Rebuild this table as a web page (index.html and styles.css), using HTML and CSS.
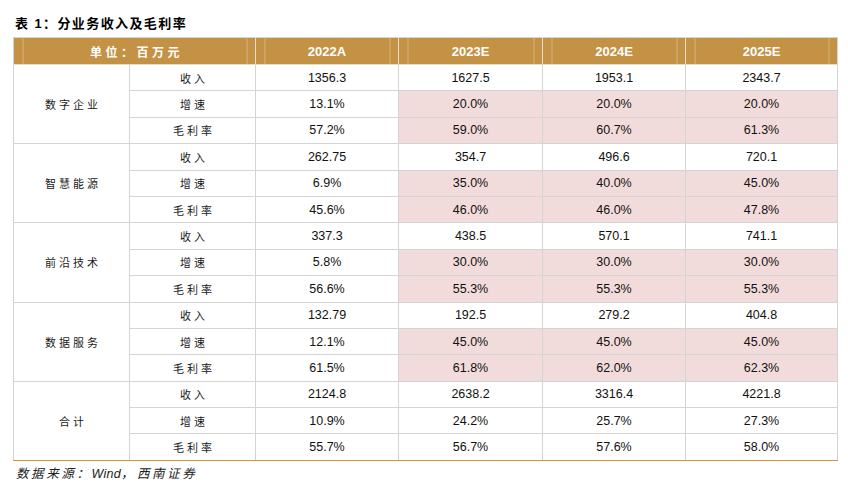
FILE: index.html
```html
<!DOCTYPE html>
<html lang="zh">
<head>
<meta charset="utf-8">
<title>分业务收入及毛利率</title>
<link rel="stylesheet" href="styles.css">
</head>
<body>
<div class="page">
  <h1 class="title">表 1：分业务收入及毛利率</h1>
  <table class="data">
    <colgroup>
      <col class="c-seg"><col class="c-item"><col class="c-y1"><col class="c-y2"><col class="c-y3"><col class="c-y4">
    </colgroup>
    <thead>
      <tr>
        <th colspan="2" class="unit">单位：百万元</th>
        <th>2022A</th><th>2023E</th><th>2024E</th><th>2025E</th>
      </tr>
    </thead>
    <tbody>
      <tr><td rowspan="3" class="seg">数字企业</td><td class="item">收入</td><td>1356.3</td><td>1627.5</td><td>1953.1</td><td>2343.7</td></tr>
      <tr><td class="item">增速</td><td>13.1%</td><td class="hl">20.0%</td><td class="hl">20.0%</td><td class="hl">20.0%</td></tr>
      <tr><td class="item">毛利率</td><td>57.2%</td><td class="hl">59.0%</td><td class="hl">60.7%</td><td class="hl">61.3%</td></tr>

      <tr><td rowspan="3" class="seg">智慧能源</td><td class="item">收入</td><td>262.75</td><td>354.7</td><td>496.6</td><td>720.1</td></tr>
      <tr><td class="item">增速</td><td>6.9%</td><td class="hl">35.0%</td><td class="hl">40.0%</td><td class="hl">45.0%</td></tr>
      <tr><td class="item">毛利率</td><td>45.6%</td><td class="hl">46.0%</td><td class="hl">46.0%</td><td class="hl">47.8%</td></tr>

      <tr><td rowspan="3" class="seg">前沿技术</td><td class="item">收入</td><td>337.3</td><td>438.5</td><td>570.1</td><td>741.1</td></tr>
      <tr><td class="item">增速</td><td>5.8%</td><td class="hl">30.0%</td><td class="hl">30.0%</td><td class="hl">30.0%</td></tr>
      <tr><td class="item">毛利率</td><td>56.6%</td><td class="hl">55.3%</td><td class="hl">55.3%</td><td class="hl">55.3%</td></tr>

      <tr><td rowspan="3" class="seg">数据服务</td><td class="item">收入</td><td>132.79</td><td>192.5</td><td>279.2</td><td>404.8</td></tr>
      <tr><td class="item">增速</td><td>12.1%</td><td class="hl">45.0%</td><td class="hl">45.0%</td><td class="hl">45.0%</td></tr>
      <tr><td class="item">毛利率</td><td>61.5%</td><td class="hl">61.8%</td><td class="hl">62.0%</td><td class="hl">62.3%</td></tr>

      <tr><td rowspan="3" class="seg">合计</td><td class="item">收入</td><td>2124.8</td><td>2638.2</td><td>3316.4</td><td>4221.8</td></tr>
      <tr><td class="item">增速</td><td>10.9%</td><td>24.2%</td><td>25.7%</td><td>27.3%</td></tr>
      <tr class="last"><td class="item">毛利率</td><td>55.7%</td><td>56.7%</td><td>57.6%</td><td>58.0%</td></tr>
    </tbody>
  </table>
  <p class="source">数据来源：<span class="latin">Wind，</span>西南证券</p>
</div>
</body>
</html>
```

FILE: styles.css
```css
html, body {
  margin: 0;
  padding: 0;
  background: #ffffff;
}

.page {
  width: 848px;
  height: 482px;
  overflow: hidden;
  font-family: "Liberation Sans", Arial, "Noto Sans CJK SC", sans-serif;
  color: #111111;
}

.title {
  margin: 0;
  padding: 16px 0 0 15px;
  height: 21px;
  font-family: "Liberation Sans", "Noto Sans CJK SC", sans-serif;
  font-size: 13px;
  line-height: 16px;
  font-weight: bold;
  letter-spacing: 1.4px;
  color: #000000;
}

.data {
  margin-left: 13px;
  width: 824px;
  border-collapse: collapse;
  table-layout: fixed;
}

.c-seg { width: 116px; }
.c-item { width: 126px; }
.c-y1 { width: 143px; }
.c-y2 { width: 144px; }
.c-y3 { width: 143px; }
.c-y4 { width: 152px; }

.data th {
  height: 26px;
  padding: 0;
  background-color: #c39245;
  background-image: linear-gradient(to right,
      transparent 8px, rgba(255, 240, 215, 0.35) 8px, rgba(255, 240, 215, 0.35) 9px, transparent 9px,
      transparent calc(100% - 9px), rgba(255, 240, 215, 0.35) calc(100% - 9px), rgba(255, 240, 215, 0.35) calc(100% - 8px), transparent calc(100% - 8px));
  color: #ffffff;
  font-size: 13px;
  font-weight: bold;
  text-align: center;
  vertical-align: middle;
  border: 1px solid #e6dccd;
  border-top-color: #d4d4d4;
}

.data th:first-child { border-left-color: #d4d4d4; }
.data th:last-child { border-right-color: #d4d4d4; }

.data th.unit {
  font-family: "Noto Sans CJK SC", sans-serif;
  font-size: 12px;
  font-weight: bold;
  letter-spacing: 3.5px;
  padding-left: 4px;
}

.data td {
  height: 25.4px;
  padding: 0;
  border: 1px solid #d4d4d4;
  text-align: center;
  vertical-align: middle;
  font-size: 12.5px;
  color: #111111;
  background: #ffffff;
}

.data td.hl { background: #f2dcdb; }

.data td.seg,
.data td.item {
  font-family: "Noto Sans CJK SC", sans-serif;
  font-size: 11px;
  letter-spacing: 3px;
  color: #1a1a1a;
  padding-left: 3px;
}

.data tr.last td { border-bottom: 1.5px solid #dc9236; }
.data tbody tr:nth-child(13) td.seg { border-bottom: 1.5px solid #dc9236; }

.source {
  margin: 0;
  padding: 5px 0 0 16px;
  font-family: "Liberation Sans", "Noto Sans CJK SC", sans-serif;
  font-size: 12.5px;
  line-height: 16px;
  font-style: italic;
  color: #222222;
  letter-spacing: 2.6px;
}

.source .latin {
  letter-spacing: 0.3px;
  margin-right: 3px;
}
```
